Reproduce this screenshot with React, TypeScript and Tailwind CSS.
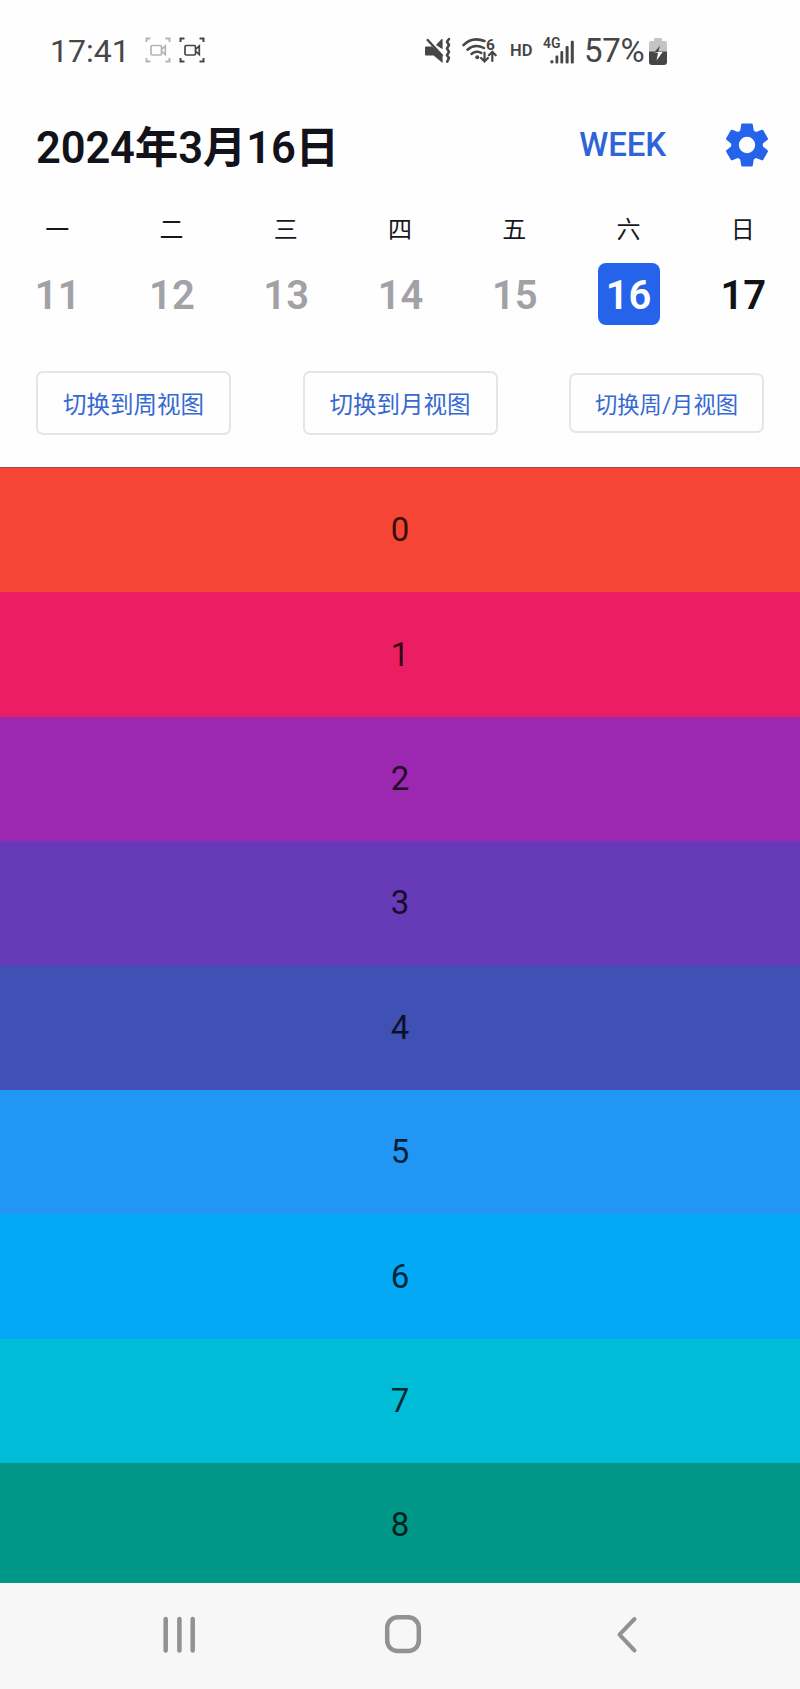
import React from "react";

const days = [
  { week: "一", date: 11 },
  { week: "二", date: 12 },
  { week: "三", date: 13 },
  { week: "四", date: 14 },
  { week: "五", date: 15 },
  { week: "六", date: 16 },
  { week: "日", date: 17 },
];

const rows = [
  "bg-[#f64435]",
  "bg-[#ec1e63]",
  "bg-[#9c27b0]",
  "bg-[#673ab7]",
  "bg-[#3f51b5]",
  "bg-[#2296f5]",
  "bg-[#03a9f5]",
  "bg-[#00bcd6]",
  "bg-[#009788]",
];

function dateStyle(date: number) {
  if (date === 16) return "bg-[#2563eb] text-white";
  if (date < 16) return "pl-[1px] text-[#a1a1a6]";
  return "pl-[1px] text-[#111118]";
}

function CameraIcon({ className }: { className: string }) {
  return (
    <svg viewBox="0 0 26 26" className={className} fill="none" stroke="currentColor" strokeWidth="2">
      <path d="M1.5 5V1.5H5.5M20.5 1.5h4V5M24.5 21v3.5h-4M5.5 24.5h-4V21" />
      <rect x="6" y="8.5" width="10.5" height="9.5" rx="1.2" strokeWidth="1.7" />
      <path d="M16.8 12.2 20.3 9v8.6L16.8 14.4" strokeWidth="1.7" />
    </svg>
  );
}

function GearIcon() {
  return (
    <svg viewBox="-22 -22 44 44" className="size-[44px]" fill="#2563eb">
      <circle r="12" fill="none" stroke="#2563eb" strokeWidth="7.6" />
      {[0, 60, 120, 180, 240, 300].map((angle) => (
        <path
          key={angle}
          d="M-4.6-21.4H4.6Q5.6-21.4 5.8-20.4L7-13H-7L-5.8-20.4Q-5.6-21.4-4.6-21.4Z"
          transform={`rotate(${angle})`}
        />
      ))}
    </svg>
  );
}

function StatusBar() {
  return (
    <header className="flex h-[100px] items-center text-[#464646]">
      <span className="ml-[50px] w-[80px] pt-[1px] text-[32px] leading-none">17:41</span>
      <CameraIcon className="ml-[15px] size-[26px] text-[#b5b5b5]" />
      <CameraIcon className="ml-[8px] size-[26px]" />
      <svg viewBox="0 0 72 30" className="ml-[220px] h-[30px] w-[72px]" fill="none" stroke="currentColor">
        <path d="M1 11.5h6L17.6 21V28L8.6 20.5H1a1 1 0 0 1-1-1v-7a1 1 0 0 1 1-1ZM11 10l5.6-6a.6.6 0 0 1 1 .4v9.8Z" fill="currentColor" stroke="none" />
        <path d="M2 4.2 17.5 21" strokeWidth="2.4" />
        <path d="m24 4-2 2.8 2 3.2-2 3.4 2 3.4-2 3.4 2 2.8-1.8 3.6" strokeWidth="2.6" strokeLinejoin="round" strokeLinecap="round" />
        <g strokeWidth="2.5" strokeLinecap="round">
          <path d="M38.5 10.2C43.8 4.7 51.5 3 59.5 6" />
          <path d="M42.5 14.7C46.8 10.8 53 10 59 13" />
          <path d="M46.5 19C49.5 16.3 53.8 16 56.3 18" />
          <path d="M59.5 17.5v8.7M56.1 23l3.4 3.5 3.4-3.5M67.3 26V17M63.9 20.3l3.4-3.5 3.4 3.5" strokeWidth="2.2" />
        </g>
        <circle cx="52.3" cy="22.2" r="2" fill="currentColor" stroke="none" />
        <text x="60.9" y="15" fontSize="15.5" fontWeight="700" fill="currentColor" stroke="none">6</text>
      </svg>
      <span className="ml-[13px] mt-[2px] w-[24px] text-[16.5px] leading-none font-semibold">HD</span>
      <svg viewBox="0 0 34 30" className="ml-[9px] h-[30px] w-[34px]" fill="currentColor">
        <text x="0" y="13" fontSize="14" fontWeight="600">4G</text>
        <rect x="7.3" y="25.2" width="3.2" height="3.3" rx="1.4" />
        <rect x="12.5" y="20.5" width="2.8" height="8" rx="1" />
        <rect x="17.4" y="16" width="2.8" height="12.5" rx="1" />
        <rect x="22.6" y="11" width="3" height="17.5" rx="1" />
        <rect x="27.8" y="5.8" width="3" height="22.7" rx="1" />
      </svg>
      <span className="ml-[7px] w-[61px] text-[33px] leading-none tracking-[-0.3px]">57%</span>
      <svg viewBox="0 0 18 27" className="mt-[2px] ml-[4px] h-[27px] w-[18px]">
        <path d="M6 0h6a1 1 0 0 1 1 1v2h3a2 2 0 0 1 2 2v10H0V5a2 2 0 0 1 2-2h3V1a1 1 0 0 1 1-1Z" fill="#c4c4c4" />
        <path d="M0 13.5h18V24a3 3 0 0 1-3 3H3a3 3 0 0 1-3-3Z" fill="#464646" />
        <path d="m11 7.5-6.5 8H9L7.5 22l6-8H9.2Z" fill="#464646" />
        <path d="M4.5 15H9L7.5 22.5l6.2-8.5h-4Z" fill="#fff" />
      </svg>
    </header>
  );
}

export default function App() {
  return (
    <div className="flex h-[1689px] w-[800px] flex-col overflow-hidden bg-[#fefefe] font-['Roboto','Noto_Sans_CJK_SC',sans-serif] text-[#18181b]">
      <StatusBar />

      <section className="flex h-[100px] items-start justify-between pr-[31px] pl-[36px]">
        <h1 className="mt-[23px] text-[43.5px] leading-[52px] font-semibold tracking-[-0.15px] whitespace-nowrap text-[#12121a]">2024年3月16日</h1>
        <div className="flex items-start">
          <button className="mt-[19px] mr-[59px] h-[52px] text-[33px] leading-[52px] tracking-[-0.1px] font-medium text-[#2f63d8]">WEEK</button>
          <button className="mt-[23px]" aria-label="Settings">
            <GearIcon />
          </button>
        </div>
      </section>

      <section className="grid h-[171px] grid-cols-7">
        {days.map(({ week, date }) => (
          <div key={date} className="flex flex-col items-center">
            <span className="mt-[13px] h-[34px] text-[24px] leading-[34px]">{week}</span>
            <span className={`mt-[16px] flex size-[62px] items-center justify-center rounded-[8px] pt-[4px] text-[40px] leading-none font-semibold ${dateStyle(date)}`}>
              {date}
            </span>
          </div>
        ))}
      </section>

      <section className="flex h-[96px] items-start justify-between px-[36px] text-[#3769d2]">
        <button className="h-[64px] w-[195px] rounded-[7px] border-2 border-[#e5e5e7] pt-[6px] text-[23.5px]">切换到周视图</button>
        <button className="h-[64px] w-[195px] rounded-[7px] border-2 border-[#e5e5e7] pt-[6px] text-[23.5px]">切换到月视图</button>
        <button className="mt-[2px] h-[60px] w-[195px] rounded-[7px] border-2 border-[#e5e5e7] pt-[6px] text-[22.3px]">切换周/月视图</button>
      </section>

      <main className="h-[1116px] overflow-hidden border-t border-[#a5473e]">
        {rows.map((color, i) => (
          <div key={i} className={`flex h-[124.4px] items-center justify-center pb-[1px] text-[33px] leading-none text-black/80 ${color}`}>
            {i}
          </div>
        ))}
      </main>

      <nav className="h-[106px] bg-[#f7f7f7]">
        <svg viewBox="0 0 800 106" className="h-[106px] w-[800px]" fill="none" stroke="#929292" strokeWidth="4.5" strokeLinecap="round" strokeLinejoin="round">
          <path d="M165.7 36v31.5M179.4 36v31.5M192.7 36v31.5" />
          <rect x="387.2" y="34.3" width="31.6" height="33.8" rx="10.5" />
          <path d="m634.5 36-15 15.7 15 15.8" strokeWidth="4" />
        </svg>
      </nav>
    </div>
  );
}
